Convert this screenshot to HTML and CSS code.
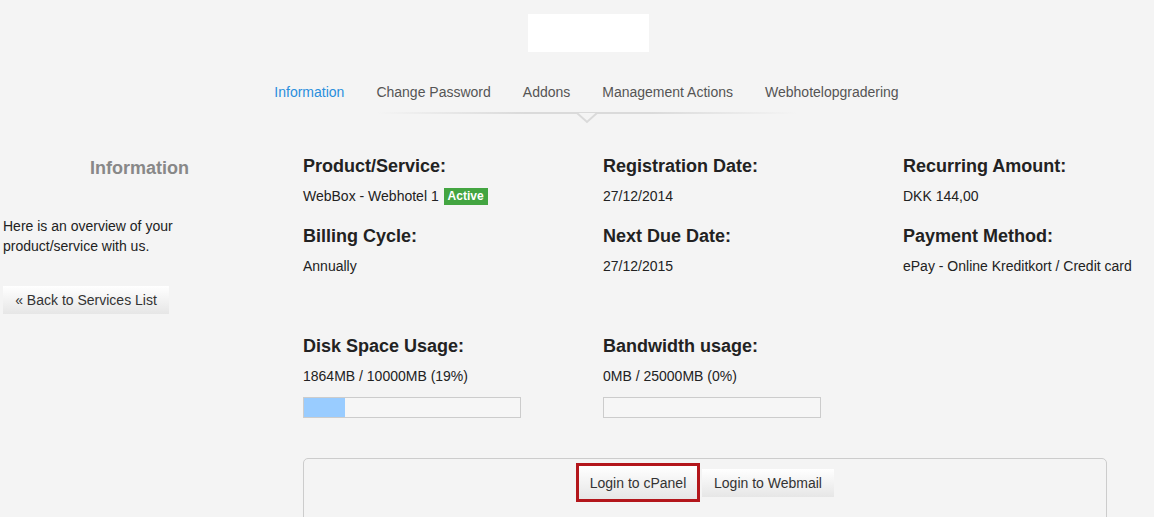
FILE: index.html
```html
<!DOCTYPE html>
<html>
<head>
<meta charset="utf-8">
<link rel="stylesheet" href="styles.css">
</head>
<body>
<header class="top">
  <div class="logo"></div>
  <nav class="tabs">
    <a class="tab active">Information</a>
    <a class="tab">Change Password</a>
    <a class="tab">Addons</a>
    <a class="tab">Management Actions</a>
    <a class="tab">Webhotelopgradering</a>
  </nav>
  <div class="divider">
    <div class="divider-line"></div>
    <svg class="notch" width="22" height="12" viewBox="0 0 22 12"><polyline points="1,1 11,10 21,1" fill="#f4f4f4" stroke="#dadada" stroke-width="2"/></svg>
  </div>
</header>
<div class="page">
  <aside class="sidebar">
    <h2 class="side-title">Information</h2>
    <p class="side-text">Here is an overview of your<br>product/service with us.</p>
    <button class="btn back">« Back to Services List</button>
  </aside>
  <main class="main">
    <div class="grid">
      <div class="cell"><h3>Product/Service:</h3><div class="val">WebBox - Webhotel 1 <span class="badge">Active</span></div></div>
      <div class="cell"><h3>Registration Date:</h3><div class="val">27/12/2014</div></div>
      <div class="cell"><h3>Recurring Amount:</h3><div class="val">DKK 144,00</div></div>
      <div class="cell"><h3>Billing Cycle:</h3><div class="val">Annually</div></div>
      <div class="cell"><h3>Next Due Date:</h3><div class="val">27/12/2015</div></div>
      <div class="cell"><h3>Payment Method:</h3><div class="val">ePay - Online Kreditkort / Credit card</div></div>
    </div>
    <div class="usage">
      <div class="cell"><h3>Disk Space Usage:</h3><div class="val">1864MB / 10000MB (19%)</div><div class="bar"><div class="fill" style="width:19%"></div></div></div>
      <div class="cell"><h3>Bandwidth usage:</h3><div class="val">0MB / 25000MB (0%)</div><div class="bar"><div class="fill" style="width:0%"></div></div></div>
    </div>
    <div class="login-box">
      <button class="btn login highlight">Login to cPanel</button>
      <button class="btn login">Login to Webmail</button>
    </div>
  </main>
</div>
</body>
</html>
```
FILE: styles.css
```css
* { box-sizing: border-box; }
html, body { margin: 0; padding: 0; }
body {
  background: #f4f4f4;
  font-family: "Liberation Sans", Arial, Helvetica, sans-serif;
  color: #222;
  font-size: 14px;
  height: 517px;
  overflow: hidden;
}
.top {
  display: flex;
  flex-direction: column;
  align-items: center;
  padding-top: 14px;
}
.logo {
  width: 121px;
  height: 38px;
  background: #fff;
  margin-left: 22px;
}
.tabs {
  display: flex;
  margin-top: 30px;
  padding-left: 19px;
}
.tab {
  padding: 0 16px;
  line-height: 20px;
  font-size: 14px;
  color: #555;
}
.tab.active { color: #2a8fdd; }
.divider {
  position: relative;
  width: 420px;
  height: 12px;
  margin-top: 10px;
  margin-left: 20px;
}
.divider-line {
  height: 2px;
  background: linear-gradient(to right, rgba(218,218,218,0), #dadada 35%, #dadada 65%, rgba(218,218,218,0));
}
.notch {
  position: absolute;
  left: 199px;
  top: 0;
}
.page {
  display: flex;
  margin-top: 31px;
}
.sidebar {
  width: 276px;
  flex: none;
  padding-left: 3px;
}
.side-title {
  margin: 2px 0 0;
  text-align: center;
  font-size: 18px;
  line-height: 22px;
  color: #888;
  font-weight: bold;
}
.side-text {
  margin: 37px 0 0;
  line-height: 20px;
  font-size: 14px;
  color: #222;
}
.btn {
  font-family: "Liberation Sans", Arial, Helvetica, sans-serif;
  font-size: 14px;
  color: #333;
  border: none;
  background: linear-gradient(#ffffff, #e6e6e6);
  height: 28px;
  padding: 0 12px;
  cursor: pointer;
}
.back { margin-top: 30px; width: 166px; }
.main {
  margin-left: 27px;
  flex: 1;
}
.grid {
  display: grid;
  grid-template-columns: 300px 300px 300px;
  row-gap: 19px;
}
.cell h3 {
  margin: 0;
  font-size: 18px;
  line-height: 22px;
  font-weight: bold;
  color: #222;
}
.val {
  margin-top: 9px;
  line-height: 20px;
  font-size: 14px;
}
.badge {
  display: inline-block;
  background: #43a541;
  color: #fff;
  font-weight: bold;
  font-size: 12px;
  line-height: 17px;
  padding: 0 4px;
  margin-left: 1px;
  vertical-align: 1px;
}
.usage {
  display: grid;
  grid-template-columns: 300px 300px;
  margin-top: 59px;
}
.bar {
  margin-top: 11px;
  width: 218px;
  height: 21px;
  border: 1px solid #ccc;
  background: #f6f6f6;
}
.fill {
  height: 100%;
  background: #99ccff;
}
.login-box {
  margin-top: 40px;
  width: 804px;
  height: 120px;
  border: 1px solid #ccc;
  border-radius: 5px;
  display: flex;
  justify-content: center;
  align-items: flex-start;
  gap: 2px;
  padding-top: 4px;
}
.login {
  width: 132px;
  padding: 0;
  margin-top: 6px;
}
.login.highlight {
  width: 124px;
  border: 3px solid #b3161b;
  height: 39px;
  margin-top: 0;
}
```
